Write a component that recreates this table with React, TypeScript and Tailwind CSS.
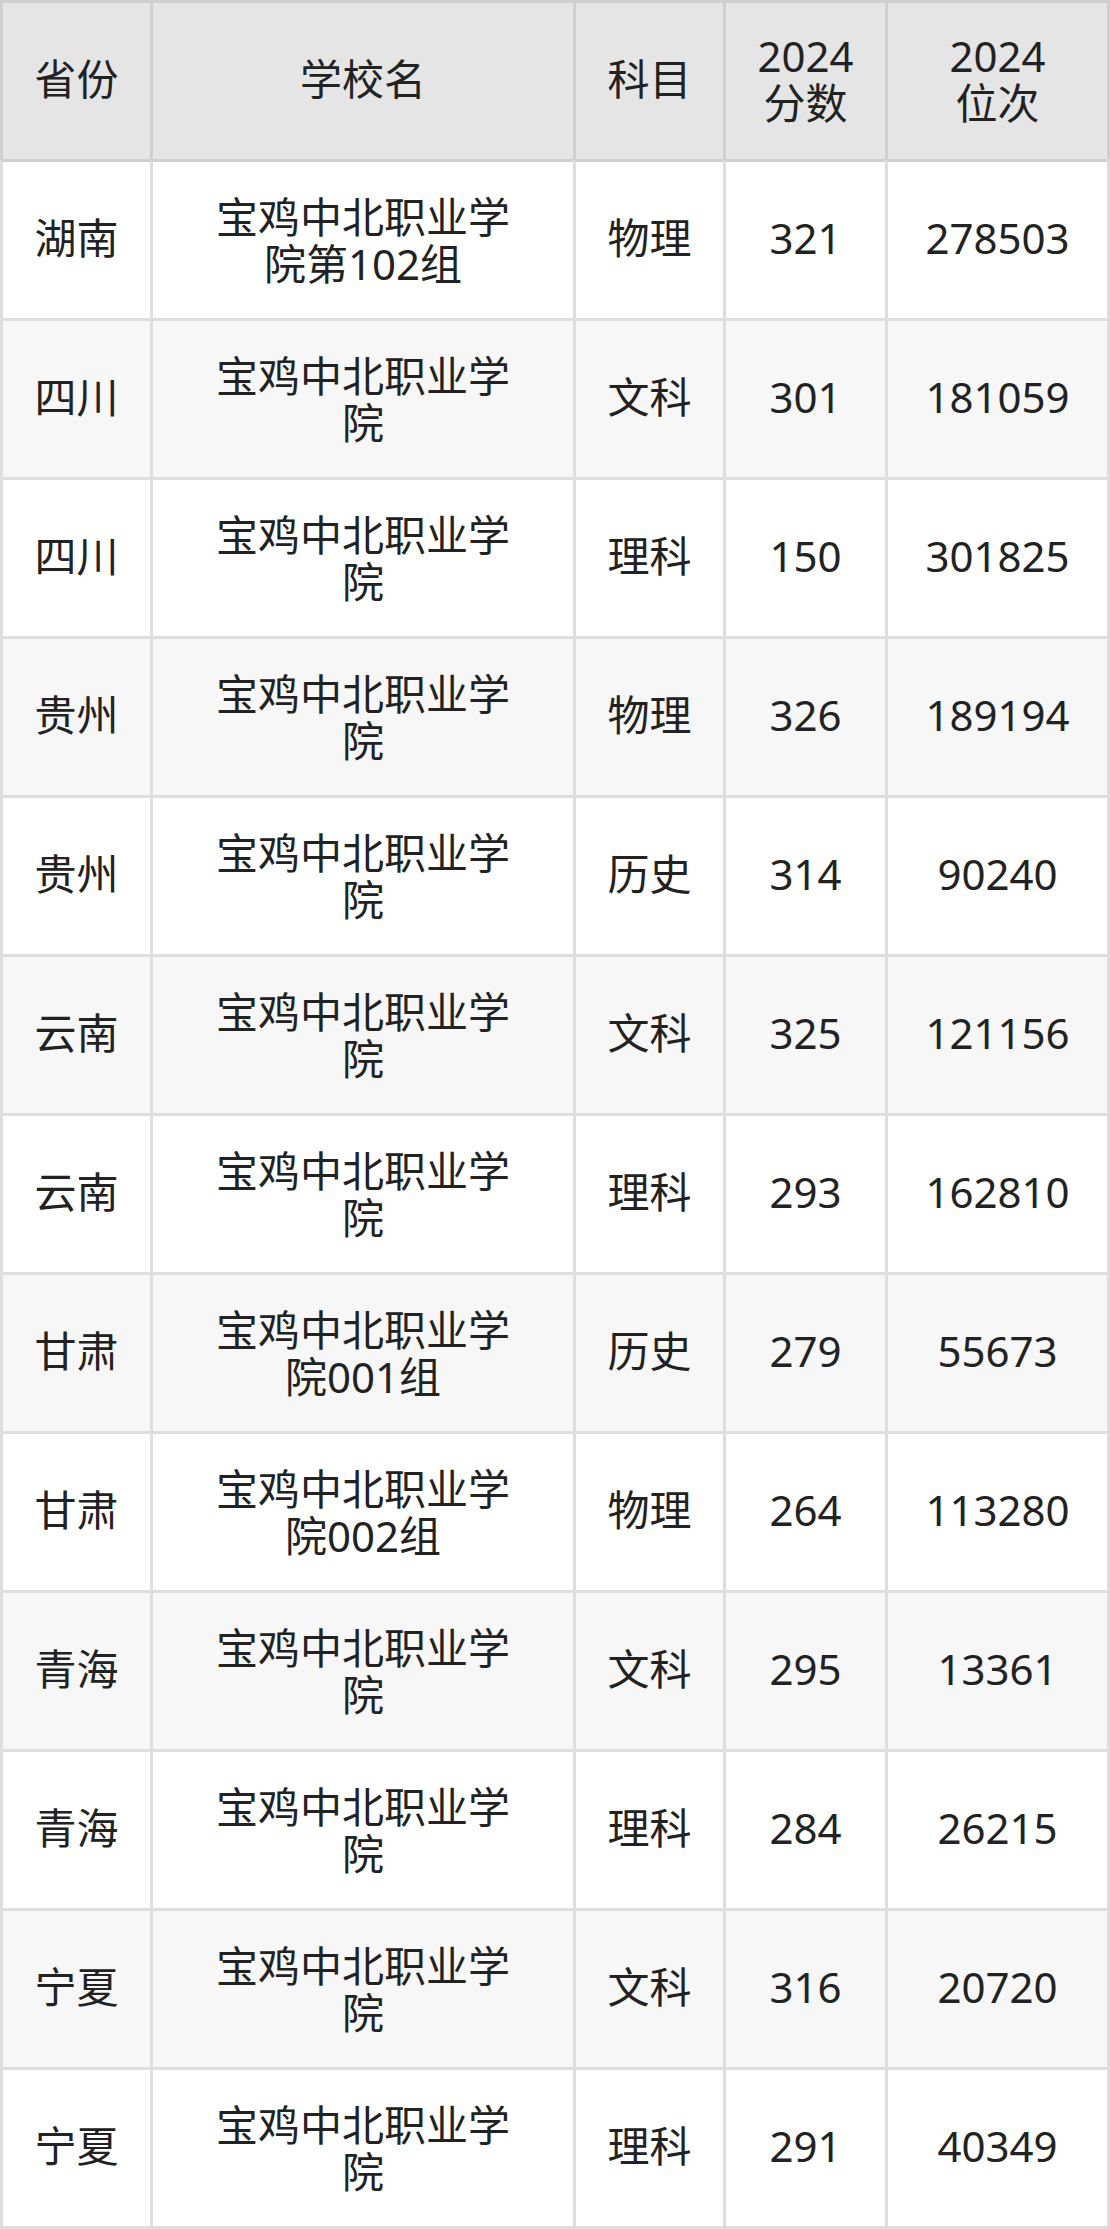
import React from "react";

const rows: [string, string, string, string, string][] = [
  ["湖南", "宝鸡中北职业学院第102组", "物理", "321", "278503"],
  ["四川", "宝鸡中北职业学院", "文科", "301", "181059"],
  ["四川", "宝鸡中北职业学院", "理科", "150", "301825"],
  ["贵州", "宝鸡中北职业学院", "物理", "326", "189194"],
  ["贵州", "宝鸡中北职业学院", "历史", "314", "90240"],
  ["云南", "宝鸡中北职业学院", "文科", "325", "121156"],
  ["云南", "宝鸡中北职业学院", "理科", "293", "162810"],
  ["甘肃", "宝鸡中北职业学院001组", "历史", "279", "55673"],
  ["甘肃", "宝鸡中北职业学院002组", "物理", "264", "113280"],
  ["青海", "宝鸡中北职业学院", "文科", "295", "13361"],
  ["青海", "宝鸡中北职业学院", "理科", "284", "26215"],
  ["宁夏", "宝鸡中北职业学院", "文科", "316", "20720"],
  ["宁夏", "宝鸡中北职业学院", "理科", "291", "40349"],
];

const font = {
  fontFamily: '"Noto Sans", "Noto Sans CJK SC", sans-serif',
};

export default function App() {
  return (
    <div
      className="w-[1110px] bg-white text-[#222222] text-[42px] leading-[47px]"
      style={font}
    >
      {/* header */}
      <div className="grid grid-cols-[150px_423px_150px_162px_222px] h-[159px] border-r-[3px] border-[#cfcfcf] bg-[#e5e5e5]">
        <div className="border-l-[3px] border-t-[3px] border-[#cfcfcf] flex items-center justify-center text-center pb-[5px]">省份</div>
        <div className="border-l-[3px] border-t-[3px] border-[#cfcfcf] flex items-center justify-center text-center pb-[5px]">学校名</div>
        <div className="border-l-[3px] border-t-[3px] border-[#cfcfcf] flex items-center justify-center text-center pb-[5px]">科目</div>
        <div className="border-l-[3px] border-t-[3px] border-[#cfcfcf] flex items-center justify-center text-center pb-[5px]">
          <span>
            2024
            <br />
            分数
          </span>
        </div>
        <div className="border-l-[3px] border-t-[3px] border-[#cfcfcf] flex items-center justify-center text-center pb-[5px]">
          <span>
            2024
            <br />
            位次
          </span>
        </div>
      </div>
      {rows.map((r, i) => {
        const alt = i % 2 === 1;
        const first = i === 0;
        const last = i === rows.length - 1;
        return (
          <div
            key={i}
            className={
              "grid grid-cols-[150px_423px_150px_162px_222px] border-r-[3px] border-[#dedede] " +
              (alt ? "bg-[#f7f7f7] " : "bg-white ") +
              (last ? "h-[162px] border-b-[3px]" : "h-[159px]")
            }
          >
            {r.map((c, j) => (
              <div
                key={j}
                className={
                  "border-l-[3px] border-t-[3px] border-l-[#dedede] flex items-center justify-center text-center " +
                  (first ? "border-t-[#cfcfcf] " : "border-t-[#dedede] ") +
                  (j === 1 ? "px-[56px]" : "pb-[5px]")
                }
              >
                <span>{c}</span>
              </div>
            ))}
          </div>
        );
      })}
    </div>
  );
}
